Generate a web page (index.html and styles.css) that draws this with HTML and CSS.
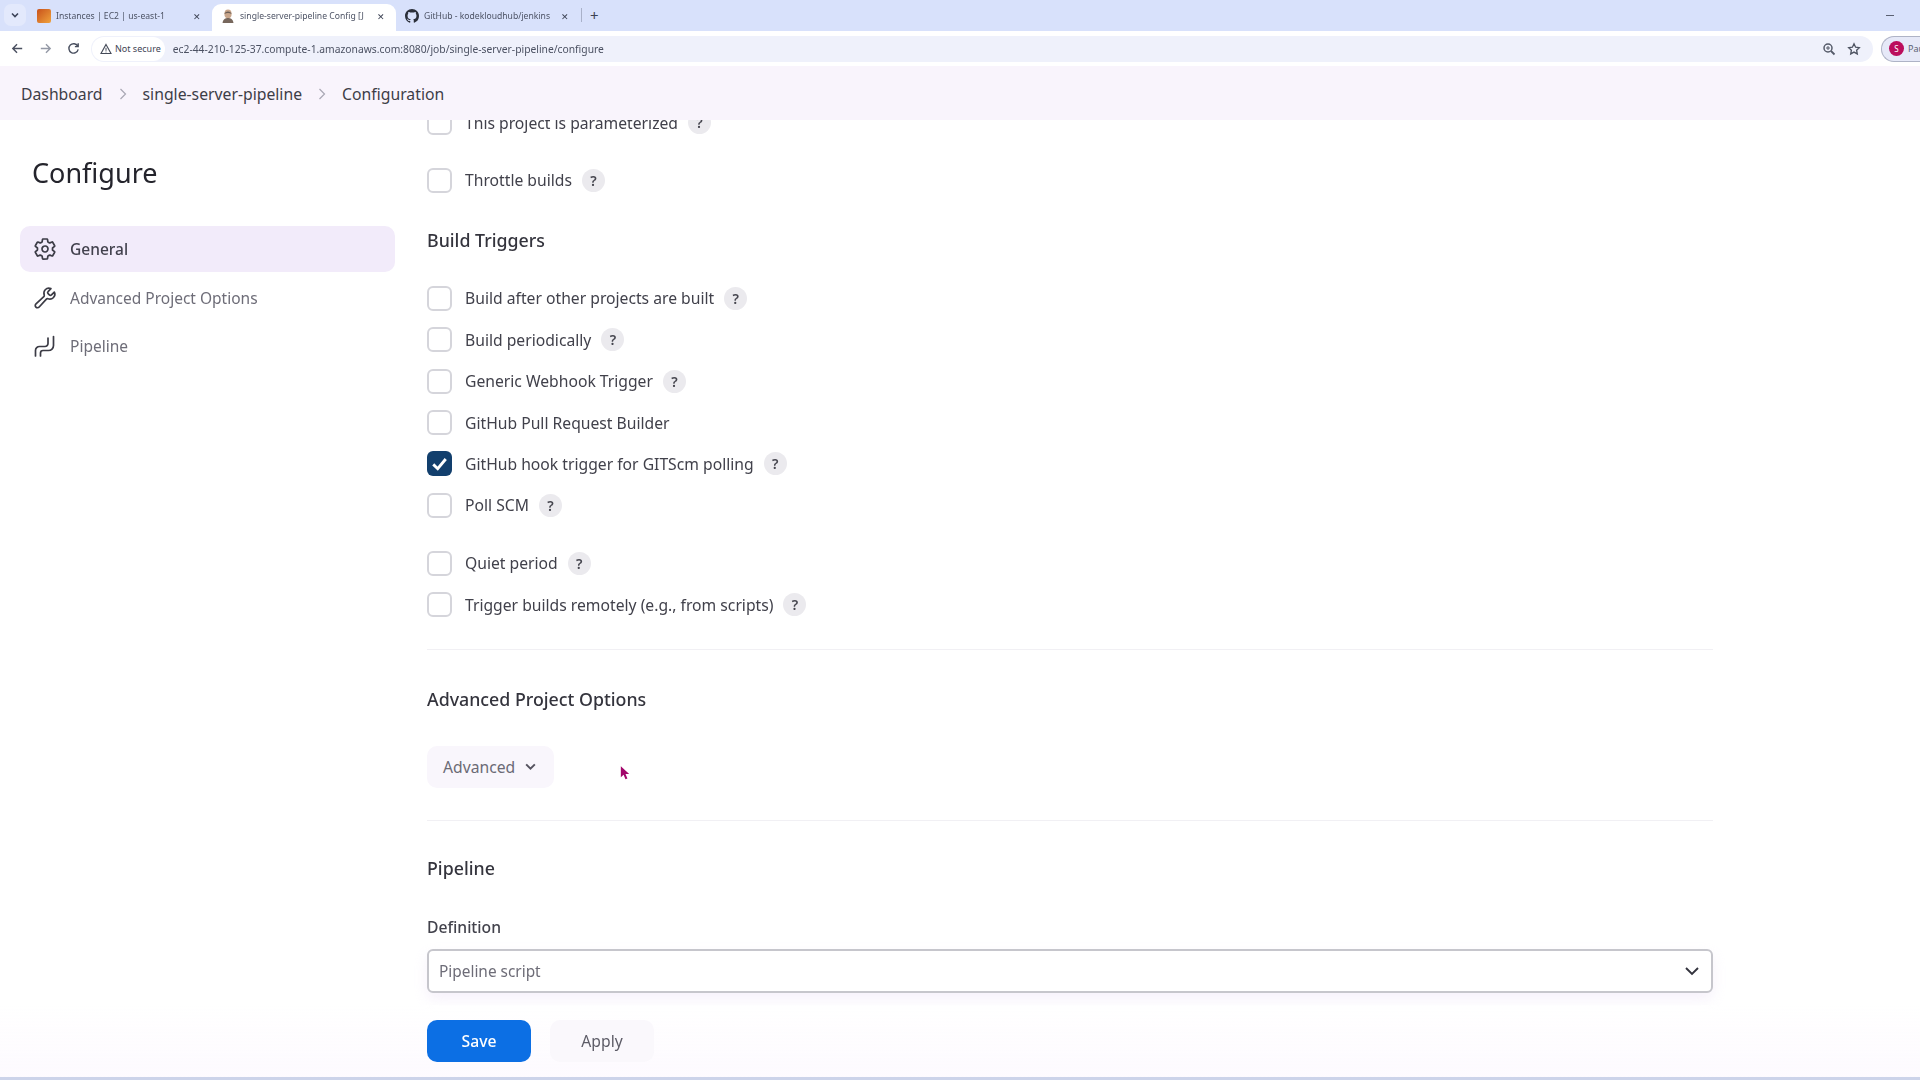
FILE: index.html
```html
<!DOCTYPE html>
<html lang="en">
<head>
  <meta charset="UTF-8">
  <title>single-server-pipeline Config [Jenkins]</title>
  <link rel="stylesheet" href="styles.css">
</head>
<body>
  <!-- Browser chrome -->
  <div class="tabstrip">
    <div class="tab-menu">
      <svg class="tiny" viewBox="0 0 10 10"><path d="M2 3.500l3 3 3-3" fill="none" stroke="#3c4358" stroke-width="1.600"/></svg>
    </div>
    <div class="tab">
      <span class="favicon favicon-aws"></span>
      <span class="tab-title">Instances | EC2 | us-east-1</span>
      <span class="tab-close">✕</span>
    </div>
    <div class="tab tab-active">
      <svg class="favicon" viewBox="0 0 14 14"><ellipse cx="7" cy="5" rx="3.600" ry="4.400" fill="#c9a68b"/><path d="M1.500 14c.5-4 3-5 5.500-5s5 1 5.500 5z" fill="#77675c"/><path d="M3.500 5c0-3.500 7-3.500 7 0-2-1.500-5-1.500-7 0z" fill="#6b5e55"/></svg>
      <span class="tab-title">single-server-pipeline Config [J</span>
      <span class="tab-close">✕</span>
    </div>
    <div class="tab">
      <svg class="favicon" viewBox="0 0 16 16"><path fill="#2b2f3a" d="M8 0C3.580 0 0 3.580 0 8c0 3.540 2.290 6.530 5.470 7.590.4.070.55-.17.55-.38 0-.19-.01-.82-.01-1.490-2.010.37-2.530-.49-2.690-.94-.09-.23-.48-.94-.82-1.130-.28-.15-.68-.52-.01-.53.63-.01 1.080.58 1.230.82.72 1.210 1.870.87 2.330.66.070-.52.28-.87.51-1.070-1.780-.2-3.640-.89-3.640-3.950 0-.87.31-1.590.82-2.150-.08-.2-.36-1.020.08-2.120 0 0 .67-.21 2.200.82.64-.18 1.320-.27 2-.27s1.360.09 2 .27c1.530-1.040 2.200-.82 2.200-.82.44 1.100.16 1.920.08 2.120.51.56.82 1.270.82 2.150 0 3.070-1.870 3.750-3.650 3.950.29.25.54.73.54 1.480 0 1.070-.01 1.930-.01 2.200 0 .21.15.46.55.38A8.010 8.010 0 0 0 16 8c0-4.420-3.580-8-8-8z"/></svg>
      <span class="tab-title">GitHub - kodekloudhub/jenkins</span>
      <span class="tab-close">✕</span>
    </div>
    <span class="tab-sep"></span>
    <span class="tab-new">+</span>
    <span class="win-min"></span>
  </div>

  <div class="toolbar">
    <svg class="nav-icon" viewBox="0 0 16 16"><path d="M13 8H3.500M7.500 3.500L3 8l4.500 4.500" fill="none" stroke="#4a5060" stroke-width="1.500"/></svg>
    <svg class="nav-icon" viewBox="0 0 16 16"><path d="M3 8h9.500M8.500 3.500L13 8l-4.500 4.500" fill="none" stroke="#9499a6" stroke-width="1.500"/></svg>
    <svg class="nav-icon" viewBox="0 0 16 16"><path d="M12.500 5.500A5 5 0 1 0 13 9M13 2.500v3.500H9.500" fill="none" stroke="#4a5060" stroke-width="1.500"/></svg>
    <div class="omnibox">
      <span class="not-secure">
        <svg class="warn" viewBox="0 0 12 12"><path d="M6 1.500L11 10.500H1z" fill="none" stroke="#444a58" stroke-width="1.100"/><path d="M6 4.800v3M6 8.600v.8" stroke="#444a58"/></svg>
        Not secure
      </span>
      <span class="url">ec2-44-210-125-37.compute-1.amazonaws.com:8080/job/single-server-pipeline/configure</span>
      <svg class="omni-icon" viewBox="0 0 14 14"><circle cx="6" cy="6" r="4" fill="none" stroke="#555b69" stroke-width="1.500"/><path d="M9 9l3.500 3.500" stroke="#555b69" stroke-width="1.800"/><path d="M4 6h4M6 4v4" stroke="#555b69"/></svg>
      <svg class="omni-icon" viewBox="0 0 14 14"><path d="M7 1.800l1.600 3.400 3.700.5-2.700 2.500.7 3.700L7 10.100l-3.300 1.800.7-3.700L1.700 5.700l3.700-.5z" fill="none" stroke="#4d5361" stroke-width="1.300"/></svg>
    </div>
    <div class="profile">
      <span class="avatar">S</span>
      <span class="profile-name">Pau</span>
    </div>
  </div>

  <!-- Jenkins page -->
  <div class="page">
    <nav class="breadcrumb">
      <span>Dashboard</span>
      <svg class="crumb-sep" viewBox="0 0 10 14"><path d="M2.500 2l5 5-5 5" fill="none" stroke="#a9a7b3" stroke-width="1.200"/></svg>
      <span>single-server-pipeline</span>
      <svg class="crumb-sep" viewBox="0 0 10 14"><path d="M2.500 2l5 5-5 5" fill="none" stroke="#a9a7b3" stroke-width="1.200"/></svg>
      <span>Configuration</span>
    </nav>

    <div class="layout">
      <aside class="sidebar">
        <h1 class="sidebar-title">Configure</h1>
        <a class="side-item side-item-active">
          <svg class="side-icon" viewBox="0 0 512 512"><path fill="none" stroke="currentColor" stroke-width="36" stroke-linecap="round" stroke-linejoin="round" d="M262.290 192.310a64 64 0 1057.400 57.400 64.130 64.130 0 00-57.400-57.400zM416.390 256a154.340 154.340 0 01-1.530 20.790l45.210 35.460a10.810 10.810 0 012.450 13.750l-42.770 74a10.810 10.810 0 01-13.140 4.590l-44.900-18.080a16.110 16.110 0 00-15.170 1.750A164.480 164.480 0 01325 400.800a15.940 15.940 0 00-8.820 12.140l-6.730 47.890a11.080 11.080 0 01-10.680 9.170h-85.540a11.110 11.110 0 01-10.690-8.870l-6.720-47.820a16.070 16.070 0 00-9-12.220 155.300 155.300 0 01-21.460-12.570 16 16 0 00-15.110-1.710l-44.890 18.070a10.810 10.810 0 01-13.140-4.580l-42.770-74a10.800 10.800 0 012.450-13.750l38.210-30a16.050 16.050 0 006-14.080c-.36-4.170-.58-8.330-.58-12.500s.21-8.270.58-12.350a16 16 0 00-6.070-13.940l-38.190-30A10.810 10.810 0 0149.480 186l42.770-74a10.810 10.810 0 0113.140-4.590l44.900 18.080a16.110 16.110 0 0015.170-1.750A164.480 164.480 0 01187 111.200a15.940 15.940 0 008.820-12.140l6.730-47.890A11.080 11.080 0 01213.230 42h85.540a11.110 11.110 0 0110.690 8.870l6.720 47.820a16.070 16.070 0 009 12.220 155.300 155.300 0 0121.460 12.570 16 16 0 0015.110 1.710l44.890-18.070a10.810 10.810 0 0113.140 4.580l42.770 74a10.800 10.800 0 01-2.450 13.750l-38.210 30a16.050 16.050 0 00-6.050 14.080c.33 4.140.55 8.300.55 12.470z"/></svg>
          General
        </a>
        <a class="side-item">
          <svg class="side-icon" viewBox="0 0 512 512"><path fill="none" stroke="currentColor" stroke-width="36" stroke-linecap="round" stroke-linejoin="round" d="M393.870 190a32.100 32.100 0 01-45.250 0l-26.570-26.570a32.090 32.090 0 010-45.260L382.190 58a1 1 0 00-.3-1.640c-38.820-16.640-89.150-8.160-121.110 23.570-30.580 30.350-32.320 76-21.120 115.840a31.930 31.930 0 01-9.060 32.080L64 380a48.170 48.170 0 1068 68l153.860-167a31.930 31.930 0 0131.600-9.130c39.540 10.590 84.540 8.600 114.720-21.190 32.490-32 39.500-88.560 23.750-120.930a1 1 0 00-1.600-.26z"/></svg>
          Advanced Project Options
        </a>
        <a class="side-item">
          <svg class="side-icon" viewBox="0 0 24 24"><path fill="none" stroke="currentColor" stroke-width="1.700" stroke-linecap="round" d="M2.500 22v-5.500a4 4 0 0 1 4-4h5.500a3 3 0 0 0 3-3V4M7.500 22v-3a2.500 2.500 0 0 1 2.500-2.500h5.500a5 5 0 0 0 5-5V2.500"/></svg>
          Pipeline
        </a>
      </aside>

      <main class="content">
        <div class="check-list check-list-top">
          <label class="check-row"><span class="box"></span>This project is parameterized<span class="help">?</span></label>
          <label class="check-row check-row-gap"><span class="box"></span>Throttle builds<span class="help">?</span></label>
        </div>

        <h2 class="section-title section-triggers">Build Triggers</h2>

        <div class="check-list">
          <label class="check-row"><span class="box"></span>Build after other projects are built<span class="help">?</span></label>
          <label class="check-row"><span class="box"></span>Build periodically<span class="help">?</span></label>
          <label class="check-row"><span class="box"></span>Generic Webhook Trigger<span class="help">?</span></label>
          <label class="check-row"><span class="box"></span>GitHub Pull Request Builder</label>
          <label class="check-row">
            <span class="box box-checked"><svg viewBox="0 0 14 14"><path d="M3.500 7.500l2.500 2.400L10.500 4.500" fill="none" stroke="#fff" stroke-width="1.600"/></svg></span>
            GitHub hook trigger for GITScm polling<span class="help">?</span>
          </label>
          <label class="check-row"><span class="box"></span>Poll SCM<span class="help">?</span></label>
          <label class="check-row check-row-gap"><span class="box"></span>Quiet period<span class="help">?</span></label>
          <label class="check-row"><span class="box"></span>Trigger builds remotely (e.g., from scripts)<span class="help">?</span></label>
        </div>

        <hr class="divider divider-first">

        <h2 class="section-title">Advanced Project Options</h2>
        <div class="advanced-wrap">
          <button class="advanced-btn">Advanced
            <svg viewBox="0 0 12 12"><path d="M2 4l4 4 4-4" fill="none" stroke="#55535f" stroke-width="1.800"/></svg>
          </button>
          <svg class="cursor" viewBox="0 0 12 18"><path d="M1 1v13l3.300-3 2.300 5.500 2.300-1-2.300-5.200H11z" fill="#a2076b"/></svg>
        </div>

        <hr class="divider">

        <h2 class="section-title">Pipeline</h2>
        <div class="field-label">Definition</div>
        <div class="select-box">
          Pipeline script
          <svg viewBox="0 0 16 16"><path d="M2 5l6 6 6-6" fill="none" stroke="#33333d" stroke-width="1.900"/></svg>
        </div>
      </main>
    </div>

    <!-- Save bar sits over the scrolling form -->
    <div class="bottom-bar">
      <button class="btn-save">Save</button>
      <button class="btn-apply">Apply</button>
    </div>
  </div>
  <div class="window-edge"></div>
</body>
</html>
```

FILE: styles.css
```css
* {
  box-sizing: border-box;
}
html, body {
  height: 100%;
}
body {
  margin: 0;
  display: flex;
  flex-direction: column;
  overflow: hidden;
  background-color: #fff;
  color: #3b3b45;
  font-family: 'Noto Sans', sans-serif;
  font-size: 16px;
}

/* Browser chrome */
.tabstrip {
  height: 31px;
  flex: none;
  display: flex;
  align-items: flex-end;
  padding-left: 4px;
  background-color: #d8e1fb;
  font-size: 8.600px;
  color: #4c5264;
}
.tab-menu {
  width: 22px;
  height: 22px;
  margin: 0 2px 5px 0;
  display: flex;
  align-items: center;
  justify-content: center;
  border-radius: 7px;
  background-color: #e3e9fc;
}
.tiny {
  width: 10px;
  height: 10px;
}
.tab {
  width: 184px;
  height: 27px;
  flex: none;
  display: flex;
  align-items: center;
  gap: 5px;
  padding: 0 11px 3px 9px;
  border-radius: 9px 9px 0 0;
  filter: blur(0.3px);
}
.tab-active {
  background-color: #fff;
}
.tab-title {
  flex: 1;
  overflow: hidden;
  white-space: nowrap;
}
.tab-close {
  font-size: 9px;
  color: #3c4254;
}
.favicon {
  width: 14px;
  height: 14px;
  flex: none;
}
.favicon-aws {
  background: linear-gradient(135deg, #c8511b, #f0a33c);
  border-radius: 2px;
}
.tab-sep {
  width: 1px;
  height: 14px;
  margin: 0 8px 9px 1px;
  background-color: #a9b1c9;
}
.tab-new {
  margin: 0 0 7px 0;
  font-size: 15px;
  line-height: 18px;
  color: #3c4254;
}
.win-min {
  width: 8px;
  height: 1px;
  margin: 0 26px 15px auto;
  background-color: #5a6072;
}

.toolbar {
  height: 35px;
  flex: none;
  display: flex;
  align-items: center;
  padding-left: 10px;
  background-color: #fff;
}
.nav-icon {
  width: 15px;
  height: 15px;
  margin-right: 13px;
  flex: none;
}
.omnibox {
  width: 1782px;
  height: 26px;
  margin-left: -3px;
  flex: none;
  display: flex;
  align-items: center;
  padding-right: 12px;
  border-radius: 13px;
  background-color: #eff1fb;
  font-size: 10.300px;
  color: #4b5162;
}
.not-secure {
  height: 24px;
  margin: 0 8px 0 1px;
  padding: 0 4px 0 8px;
  display: flex;
  align-items: center;
  gap: 3px;
  border-radius: 12px;
  background-color: #fff;
  font-size: 9px;
  color: #3f4554;
}
.warn {
  width: 12px;
  height: 12px;
}
.url {
  flex: 1;
  filter: blur(0.2px);
}
.omni-icon {
  width: 14px;
  height: 14px;
  margin-left: 11px;
}
.profile {
  height: 26px;
  margin-left: 8px;
  flex: 1;
  display: flex;
  align-items: center;
  gap: 4px;
  padding-left: 7px;
  border: 1px solid #aeb3c6;
  border-right: none;
  border-radius: 13px 0 0 13px;
  background-color: #e6e9f8;
  overflow: hidden;
  font-size: 9px;
  color: #5c6274;
}
.avatar {
  width: 15px;
  height: 15px;
  flex: none;
  display: flex;
  align-items: center;
  justify-content: center;
  border-radius: 50%;
  background-color: #bb0e5c;
  color: #fff;
  font-size: 8px;
}

/* Jenkins page - the reference is a soft video frame */
.page {
  flex: 1;
  position: relative;
  overflow: hidden;
  min-height: 0;
  filter: blur(0.35px);
}
.breadcrumb {
  height: 54px;
  display: flex;
  align-items: center;
  gap: 15px;
  padding: 1px 0 0 21px;
  background-color: #f9f4fc;
  color: #3d3d47;
  font-size: 15.750px;
  position: relative;
  z-index: 1;
}
.crumb-sep {
  width: 10px;
  height: 14px;
}
.layout {
  display: flex;
}
.sidebar {
  width: 427px;
  flex: none;
  padding: 0 32px 0 20px;
}
.sidebar-title {
  margin: 31px 0 31px 12px;
  font-size: 27px;
  line-height: 44px;
  font-weight: 400;
  color: #24242c;
}
.side-item {
  height: 46px;
  margin-bottom: 2.500px;
  display: flex;
  align-items: center;
  gap: 13px;
  padding-left: 13px;
  border-radius: 10px;
  color: #6e6d78;
  font-size: 15.500px;
}
.side-item-active {
  background-color: #f2ebfa;
  color: #42414d;
  font-weight: 500;
}
.side-icon {
  width: 24px;
  height: 24px;
  flex: none;
  color: #3b3b45;
}
.content {
  width: 1286px;
  flex: none;
}
.check-list {
  display: flex;
  flex-direction: column;
  gap: 13.400px;
}
.check-list-top {
  margin-top: -11.500px;
}
.check-row {
  height: 28px;
  display: flex;
  align-items: center;
  color: #41414b;
  font-size: 15.700px;
}
.check-row-gap {
  margin-top: 16.500px;
}
.box {
  width: 25px;
  height: 25px;
  flex: none;
  margin-right: 13px;
  border: 2px solid #d5d5db;
  border-radius: 6px;
  background-color: #fff;
}
.box-checked {
  border: none;
  background-color: #123f6d;
}
.box-checked svg {
  display: block;
  width: 25px;
  height: 25px;
}
.help {
  width: 23px;
  height: 23px;
  margin-left: 10px;
  display: flex;
  align-items: center;
  justify-content: center;
  border-radius: 50%;
  background-color: #ebeaee;
  color: #46464f;
  font-size: 14px;
  font-weight: 600;
}
.section-title {
  margin: 0;
  height: 28px;
  line-height: 28px;
  font-size: 17.800px;
  font-weight: 500;
  color: #34343d;
}
.section-triggers {
  margin: 31.500px 0 30.500px;
}
.divider {
  margin: 32px 0 33.500px;
  border: none;
  border-top: 1px solid #f1f0f4;
}
.divider-first {
  margin: 30.500px 0 34.500px;
}
.advanced-wrap {
  position: relative;
  margin-top: 33px;
}
.advanced-btn {
  height: 42px;
  padding: 0 17px 0 16px;
  display: inline-flex;
  align-items: center;
  gap: 9px;
  border: none;
  border-radius: 10px;
  background-color: #f9f6fc;
  color: #6b6a75;
  font-family: inherit;
  font-size: 15.700px;
}
.advanced-btn svg {
  width: 13px;
  height: 13px;
}
.cursor {
  position: absolute;
  left: 193px;
  top: 19px;
  width: 10px;
  height: 16px;
}
.field-label {
  margin-top: 33px;
  height: 24px;
  line-height: 24px;
  font-size: 15.700px;
  font-weight: 500;
  color: #42424c;
}
.select-box {
  height: 44px;
  margin-top: 10px;
  display: flex;
  align-items: center;
  justify-content: space-between;
  padding: 0 11px 0 10px;
  border: 2px solid #c6c6cc;
  border-radius: 6px;
  background-color: #fff;
  box-shadow: 0 6px 14px rgba(240, 232, 248, 0.6);
  color: #6d6c77;
  font-size: 15.400px;
}
.select-box svg {
  width: 16px;
  height: 16px;
}
.bottom-bar {
  position: absolute;
  left: 0;
  right: 0;
  bottom: 0;
  height: 72px;
  display: flex;
  align-items: flex-start;
  gap: 19px;
  padding: 15px 0 0 427px;
  background: linear-gradient(to bottom, rgba(255, 255, 255, 0.9), #fdfaff);
}
.btn-save, .btn-apply {
  height: 42px;
  border: none;
  border-radius: 10px;
  font-family: inherit;
  font-size: 15.700px;
}
.btn-save {
  width: 104px;
  background-color: #0c6fe4;
  color: #fff;
  font-weight: 500;
}
.btn-apply {
  width: 104px;
  background-color: #faf8fc;
  color: #5d5c67;
}
.window-edge {
  height: 3px;
  flex: none;
  background-color: #ccd3ea;
}
```
